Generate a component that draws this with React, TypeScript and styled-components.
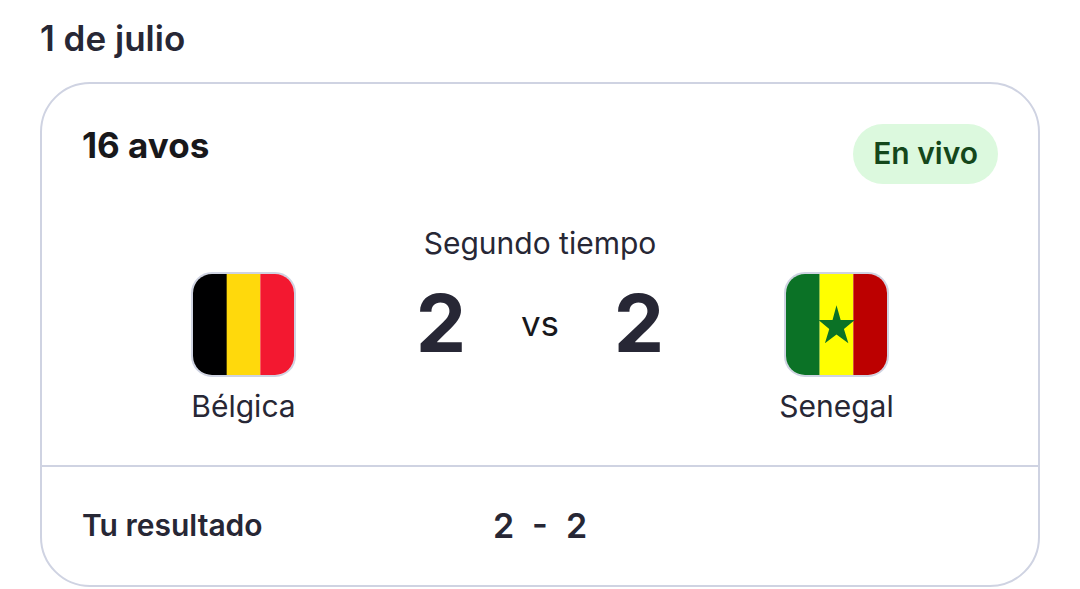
import React from 'react'
import styled, { createGlobalStyle } from 'styled-components'

const Belgica = () => (
  <svg width="100%" height="100%" viewBox="0 0 102 102">
    <rect width="35" height="102" fill="#000001" />
    <rect x="34" width="34" height="102" fill="#ffd90c" />
    <rect x="68" width="34" height="102" fill="#f31830" />
  </svg>
)

const Senegal = () => (
  <svg width="100%" height="100%" viewBox="0 0 102 102">
    <rect width="34" height="102" fill="#0b7226" />
    <rect x="34" width="34" height="102" fill="#ff0" />
    <rect x="68" width="34" height="102" fill="#bc0000" />
    <path d="M51 31.500L55.200 46.500H69.500L58.500 55.500L63 70L51 61.200L39.300 70L43.700 55.500L32.800 46.500H47Z" fill="#0b7226" />
  </svg>
)

const Team = ({ name, children }: { name: string, children: React.ReactNode }) => {
  return (
    <TeamContainer>
      <Flag>{children}</Flag>
      <TeamName>{name}</TeamName>
    </TeamContainer>
  )
}

const App = () => {
  return (
    <Page>
      <GlobalStyle />
      <DateTitle>1 de julio</DateTitle>
      <Card>
        <Match>
          <Header>
            <Stage>16 avos</Stage>
            <Badge>En vivo</Badge>
          </Header>
          <Board>
            <Team name="Bélgica"><Belgica /></Team>
            <Center>
              <Period>Segundo tiempo</Period>
              <ScoreRow>
                <Score>2</Score>
                <Versus>vs</Versus>
                <Score>2</Score>
              </ScoreRow>
            </Center>
            <Team name="Senegal"><Senegal /></Team>
          </Board>
        </Match>
        <Footer>
          <FooterLabel>Tu resultado</FooterLabel>
          <Prediction>
            <span>2</span>
            <Dash>-</Dash>
            <span>2</span>
          </Prediction>
        </Footer>
      </Card>
    </Page>
  )
}

const GlobalStyle = createGlobalStyle`
  * {
    box-sizing: border-box;
  }
  body {
    margin: 0;
    background: #fff;
    color: #272735;
    font-family: Inter, sans-serif;
  }
`
const Page = styled.div`
  height: 589px;
  padding: 18px 40px 0;
  overflow: hidden;
`
const DateTitle = styled.div`
  font-size: 35px;
  font-weight: 600;
  line-height: 40px;
`
const Card = styled.div`
  height: 505px;
  margin-top: 24px;
  border: 2px solid #cfd3e2;
  border-radius: 50px;
`
const Match = styled.div`
  height: 383px;
  padding: 40px 40px 0;
  border-bottom: 2px solid #cfd3e2;
`
const Header = styled.div`
  display: flex;
  justify-content: space-between;
  align-items: flex-start;
  height: 99px;
`
const Stage = styled.div`
  color: #18181b;
  font-size: 35px;
  font-weight: 700;
  line-height: 42px;
`
const Badge = styled.div`
  height: 60px;
  padding: 0 20px;
  border-radius: 30px;
  background: #dcf9de;
  color: #14471b;
  font-size: 30px;
  font-weight: 600;
  line-height: 58px;
`
const Board = styled.div`
  display: grid;
  grid-template-columns: 323px 270px 323px;
`
const TeamContainer = styled.div`
  display: flex;
  flex-direction: column;
  align-items: center;
  padding-top: 49px;
`
const Flag = styled.div`
  width: 105px;
  height: 105px;
  overflow: hidden;
  border: 2px solid #cfd3e2;
  border-radius: 21px;

  svg {
    display: block;
  }
`
const TeamName = styled.div`
  margin-top: 9px;
  font-size: 30px;
  line-height: 40px;
`
const Center = styled.div`
  display: flex;
  flex-direction: column;
  align-items: center;
`
const Period = styled.div`
  font-size: 30px;
  line-height: 40px;
  white-space: nowrap;
`
const ScoreRow = styled.div`
  display: grid;
  grid-template-columns: 72px 126px 72px;
  align-items: center;
  height: 100px;
  margin-top: 10px;
  text-align: center;
`
const Score = styled.div`
  font-size: 80px;
  font-weight: 700;
  line-height: 100px;
`
const Versus = styled.div`
  color: #18181b;
  font-size: 35px;
  line-height: 44px;
`
const Footer = styled.div`
  display: grid;
  grid-template-columns: 1fr auto 1fr;
  align-items: center;
  height: 116px;
  padding: 0 40px;
`
const FooterLabel = styled.div`
  font-size: 30px;
  font-weight: 600;
`
const Prediction = styled.div`
  display: flex;
  gap: 18px;
  padding-top: 2px;
  font-size: 34px;
  font-weight: 600;
  line-height: 40px;
`
const Dash = styled.span`
  margin-top: -2px;
`

export default App
